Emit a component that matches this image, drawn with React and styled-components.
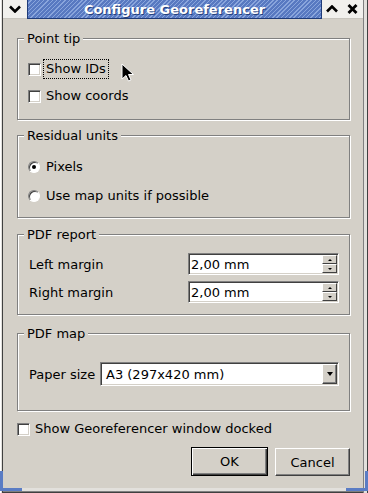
import React from 'react';
import styled, { createGlobalStyle } from 'styled-components';

const GlobalStyle = createGlobalStyle`
  html, body {
    margin: 0;
    padding: 0;
    background: #d4d0c8;
  }
  body {
    font-family: "DejaVu Sans", "Liberation Sans", sans-serif;
    font-size: 13px;
    color: #000;
  }
  * {
    box-sizing: border-box;
  }
`;

const Window = styled.div`
  position: relative;
  width: 368px;
  height: 493px;
  display: flex;
  flex-direction: column;
  padding: 0 5px 0 3px;
  overflow: hidden;
  background:
    linear-gradient(to right, #ffffff 0 1px, #e2e0dc 1px 2px, #404040 2px 3px, transparent 3px),
    linear-gradient(to left, #404040 0 1px, #e2e0dc 1px 4px, #808080 4px 5px, transparent 5px),
    #d4d0c8;
`;

const TitleBar = styled.div`
  display: flex;
  height: 19px;
  flex-shrink: 0;
`;

const TitleButton = styled.div`
  width: ${p => p.$w}px;
  display: flex;
  align-items: center;
  justify-content: center;
  background: #f1f0ed;
  border-bottom: 1px solid #c8c5be;
`;

const Caption = styled.div`
  flex: 1;
  display: flex;
  align-items: center;
  justify-content: center;
  background: repeating-linear-gradient(135deg, #5879c1 0 2px, #89a5dc 2px 3px);
  border: 1px solid #1f3b78;
  border-top: none;
  color: #fff;
  font-weight: bold;
  font-size: 13px;
  text-shadow: 1px 1px 0 #23407e;
  padding-top: 1px;
`;

const Body = styled.div`
  flex: 1;
  display: flex;
  flex-direction: column;
  padding: 19px 13px 0 14px;
`;

const Group = styled.div`
  position: relative;
  height: ${p => p.$h}px;
  margin-top: ${p => p.$mt || 0}px;
  flex-shrink: 0;
  border: 1px solid #808080;
  box-shadow: 1px 1px 0 #fff, inset 1px 1px 0 #fff;
  padding: ${p => p.$pt}px 10px 0 10px;
  display: flex;
  flex-direction: column;
  gap: ${p => p.$gap || 0}px;
`;

const Legend = styled.span`
  position: absolute;
  top: -8px;
  left: 6px;
  padding: 0 3px;
  line-height: 15px;
  background: #d4d0c8;
`;

const Row = styled.div`
  display: flex;
  align-items: center;
  justify-content: ${p => p.$spread ? 'space-between' : 'flex-start'};
  height: ${p => p.$h || 22}px;
  margin-top: ${p => p.$mt || 0}px;
  flex-shrink: 0;
`;

const CheckBox = styled.span`
  width: 13px;
  height: 13px;
  margin-right: 2px;
  flex-shrink: 0;
  background: #fff;
  border: 1px solid;
  border-color: #808080 #fff #fff #808080;
  box-shadow: inset 1px 1px 0 #404040, inset -1px -1px 0 #d4d0c8;
`;

const Radio = styled.span`
  position: relative;
  width: 12px;
  height: 12px;
  margin-right: 3px;
  flex-shrink: 0;
  border-radius: 50%;
  background: #fff;
  border: 1px solid;
  border-color: #808080 #fff #fff #808080;
  box-shadow: inset 1px 1px 0 #404040;

  &::after {
    content: '';
    display: ${p => p.$on ? 'block' : 'none'};
    position: absolute;
    left: 3px;
    top: 3px;
    width: 4px;
    height: 4px;
    border-radius: 50%;
    background: #000;
  }
`;

const OptionText = styled.span`
  padding: 0 2px;
  line-height: 18px;
  border: 1px ${p => p.$focus ? 'dotted #000' : 'solid transparent'};
`;

const FieldLabel = styled.span`
  padding-left: 1px;
`;

const SpinBox = styled.div`
  width: 151px;
  height: 22px;
  display: flex;
  align-items: stretch;
  background: #fff;
  border: 1px solid;
  border-color: #808080 #fff #fff #808080;
  box-shadow: inset 1px 1px 0 #404040, inset -1px -1px 0 #d4d0c8;
  padding: 1px;
`;

const SpinText = styled.span`
  flex: 1;
  display: flex;
  align-items: center;
  padding-left: 1px;
`;

const SpinButtons = styled.div`
  width: 15px;
  display: flex;
  flex-direction: column;
`;

const SpinButton = styled.div`
  height: 9px;
  display: flex;
  align-items: center;
  justify-content: center;
  background: #d4d0c8;
  border: 1px solid;
  border-color: #fff #404040 #404040 #fff;
`;

const Arrow = styled.span`
  width: 0;
  height: 0;
  border-left: ${p => p.$s}px solid transparent;
  border-right: ${p => p.$s}px solid transparent;
  ${p => p.$up
    ? `border-bottom: ${p.$hgt}px solid #000;`
    : `border-top: ${p.$hgt}px solid #000;`}
`;

const Combo = styled.div`
  width: 239px;
  height: 24px;
  display: flex;
  align-items: stretch;
  background: #fff;
  border: 1px solid;
  border-color: #808080 #fff #fff #808080;
  box-shadow: inset 1px 1px 0 #404040, inset -1px -1px 0 #d4d0c8;
  padding: 1px;
`;

const ComboText = styled.span`
  flex: 1;
  display: flex;
  align-items: center;
  padding-left: 4px;
`;

const ComboButton = styled.div`
  width: 15px;
  display: flex;
  align-items: center;
  justify-content: center;
  background: #d4d0c8;
  border: 1px solid;
  border-color: #fff #404040 #404040 #fff;
  box-shadow: inset -1px -1px 0 #808080;
`;

const ButtonRow = styled.div`
  display: flex;
  justify-content: flex-end;
  align-items: flex-end;
  gap: 7px;
  height: 29px;
  margin-top: 7px;
`;

const PushButton = styled.div`
  width: ${p => p.$default ? 77 : 75}px;
  height: ${p => p.$default ? 29 : 28}px;
  display: flex;
  align-items: center;
  justify-content: center;
  background: #d4d0c8;
  border: 1px solid;
  border-color: ${p => p.$default ? '#000' : '#fff #404040 #404040 #fff'};
  box-shadow: ${p => p.$default
    ? 'inset 1px 1px 0 #fff, inset -1px -1px 0 #404040, inset -2px -2px 0 #808080'
    : 'inset -1px -1px 0 #808080'};
`;

const BottomFrame = styled.div`
  height: 5px;
  flex-shrink: 0;
  background: linear-gradient(#e2e0dc 0 3px, #808080 3px 4px, #404040 4px);
`;

const Corner = styled.div`
  position: absolute;
  bottom: 2px;
  ${p => p.$side}: 0;
  width: 22px;
  height: 20px;
  border-bottom: 3px solid #5a7cc4;
  border-${p => p.$side}: 3px solid #5a7cc4;
`;

const Pointer = styled.svg`
  position: absolute;
  left: 121px;
  top: 63px;
`;

function ChevronDown() {
  return (
    <svg width="12" height="8" viewBox="0 0 12 8">
      <path d="M1 1.5 L6 6.5 L11 1.5" fill="none" stroke="#000" strokeWidth="2.6" />
    </svg>
  );
}

function ChevronUp() {
  return (
    <svg width="12" height="8" viewBox="0 0 12 8">
      <path d="M1 6.5 L6 1.5 L11 6.5" fill="none" stroke="#000" strokeWidth="2.6" />
    </svg>
  );
}

function CloseX() {
  return (
    <svg width="11" height="10" viewBox="0 0 11 10">
      <path d="M1.5 1 L9.5 9 M9.5 1 L1.5 9" fill="none" stroke="#000" strokeWidth="2.8" />
    </svg>
  );
}

function Spin({ value }) {
  return (
    <SpinBox>
      <SpinText>{value}</SpinText>
      <SpinButtons>
        <SpinButton><Arrow $up $s={2} $hgt={2} /></SpinButton>
        <SpinButton><Arrow $s={2} $hgt={2} /></SpinButton>
      </SpinButtons>
    </SpinBox>
  );
}

export default function App() {
  return (
    <>
      <GlobalStyle />
      <Window>
        <TitleBar>
          <TitleButton $w={24}><ChevronDown /></TitleButton>
          <Caption>Configure Georeferencer</Caption>
          <TitleButton $w={20}><ChevronUp /></TitleButton>
          <TitleButton $w={21}><CloseX /></TitleButton>
        </TitleBar>

        <Body>
          <Group $h={82} $pt={19} $gap={5}>
            <Legend>Point tip</Legend>
            <Row>
              <CheckBox />
              <OptionText $focus>Show IDs</OptionText>
            </Row>
            <Row>
              <CheckBox />
              <OptionText>Show coords</OptionText>
            </Row>
          </Group>

          <Group $h={83} $mt={15} $pt={20} $gap={7}>
            <Legend>Residual units</Legend>
            <Row>
              <Radio $on />
              <OptionText>Pixels</OptionText>
            </Row>
            <Row>
              <Radio />
              <OptionText>Use map units if possible</OptionText>
            </Row>
          </Group>

          <Group $h={81} $mt={16} $pt={18} $gap={6}>
            <Legend>PDF report</Legend>
            <Row $spread>
              <FieldLabel>Left margin</FieldLabel>
              <Spin value="2,00 mm" />
            </Row>
            <Row $spread>
              <FieldLabel>Right margin</FieldLabel>
              <Spin value="2,00 mm" />
            </Row>
          </Group>

          <Group $h={78} $mt={18} $pt={28}>
            <Legend>PDF map</Legend>
            <Row $spread $h={24}>
              <FieldLabel>Paper size</FieldLabel>
              <Combo>
                <ComboText>A3 (297x420 mm)</ComboText>
                <ComboButton><Arrow $s={3} $hgt={4} /></ComboButton>
              </Combo>
            </Row>
          </Group>

          <Row $mt={7}>
            <CheckBox />
            <OptionText>Show Georeferencer window docked</OptionText>
          </Row>

          <ButtonRow>
            <PushButton $default>OK</PushButton>
            <PushButton>Cancel</PushButton>
          </ButtonRow>
        </Body>

        <BottomFrame />
        <Corner $side="left" />
        <Corner $side="right" />

        <Pointer width="14" height="20" viewBox="0 0 14 20">
          <path d="M1 1 L1 16 L5 12.5 L7.5 18 L10 17 L7.5 11.5 L12.5 11.5 Z" fill="#000" stroke="#fff" strokeWidth="1" />
        </Pointer>
      </Window>
    </>
  );
}
